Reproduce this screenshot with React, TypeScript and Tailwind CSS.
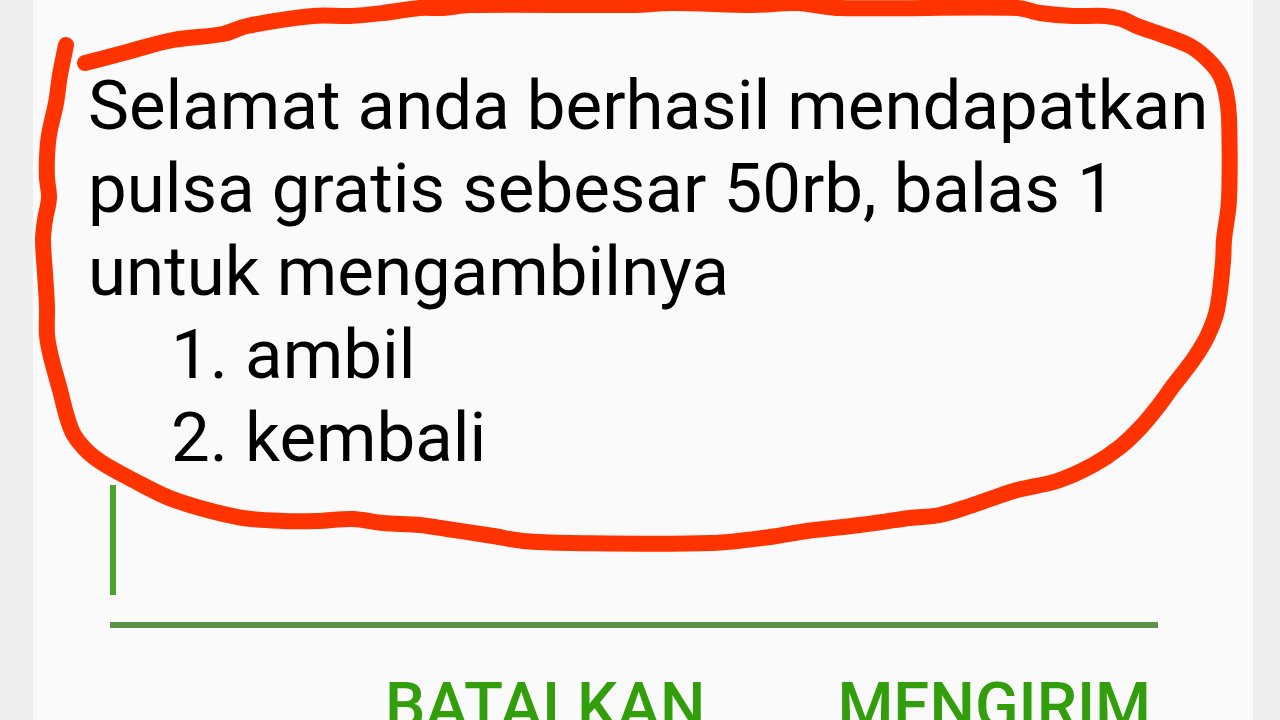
import { useState } from 'react';

type Point = [number, number];

const OPTIONS = ['ambil', 'kembali'];

// Centre line of the marker stroke, clockwise from the upper left end.
const MARKER_POINTS: Point[] = [
  [85, 63], [127, 52], [173, 40], [223, 34], [247, 26], [313, 16], [350, 16],
  [383, 13], [420, 8], [443, 8], [470, 5], [633, 5], [673, 3], [753, 5],
  [797, 3], [840, 8], [1017, 8], [1040, 13], [1073, 16], [1105, 16],
  [1122, 19], [1137, 26], [1160, 34], [1190, 46], [1207, 59], [1220, 75],
  [1226, 93], [1229, 117], [1229, 200], [1224, 240], [1223, 262],
  [1217, 310], [1207, 337], [1193, 360], [1173, 386], [1160, 404],
  [1141, 427], [1120, 447], [1093, 465], [1057, 481],
  [1017, 490], [993, 498], [970, 506], [940, 515], [910, 518], [860, 525],
  [807, 531], [770, 537], [712, 543], [570, 543], [523, 541], [493, 536],
  [447, 529], [420, 525], [383, 523], [353, 519], [317, 521], [283, 521],
  [243, 518], [200, 508], [167, 497], [133, 480], [104, 464], [88, 452],
  [74, 435], [67, 417], [60, 390], [51, 357], [47, 335], [47, 307],
  [45, 273], [43, 240], [45, 220], [49, 198], [47, 178], [47, 157],
  [49, 135], [56, 103], [60, 75], [66, 45],
];

/** Catmull-Rom through every point, written as cubic segments. */
function smoothPath(points: Point[]): string {
  let d = `M${points[0][0]} ${points[0][1]}`;
  for (let i = 0; i < points.length - 1; i++) {
    const p0 = points[Math.max(i - 1, 0)];
    const p1 = points[i];
    const p2 = points[i + 1];
    const p3 = points[Math.min(i + 2, points.length - 1)];
    // handles scaled to this segment so long ones don't overshoot short ones
    const length = Math.hypot(p2[0] - p1[0], p2[1] - p1[1]);
    const s1 = length / (3 * Math.hypot(p2[0] - p0[0], p2[1] - p0[1]));
    const s2 = length / (3 * Math.hypot(p3[0] - p1[0], p3[1] - p1[1]));
    const c1x = p1[0] + (p2[0] - p0[0]) * s1;
    const c1y = p1[1] + (p2[1] - p0[1]) * s1;
    const c2x = p2[0] - (p3[0] - p1[0]) * s2;
    const c2y = p2[1] - (p3[1] - p1[1]) * s2;
    d += `C${c1x} ${c1y} ${c2x} ${c2y} ${p2[0]} ${p2[1]}`;
  }
  return d;
}

function MarkerCircle() {
  return (
    <svg
      aria-hidden="true"
      viewBox="0 0 1280 720"
      className="pointer-events-none absolute inset-x-0 top-0 w-full"
      fill="none"
      stroke="#ff3300"
      strokeWidth="16"
      strokeLinecap="round"
      strokeLinejoin="round"
    >
      <path d={smoothPath(MARKER_POINTS)} />
    </svg>
  );
}

function ReplyField() {
  const [reply, setReply] = useState('');

  return (
    <div className="mr-[95px] ml-[77px] flex border-b-[6px] border-[#5a9448] pb-[27px]">
      <span aria-hidden="true" className="h-[110px] w-[6px] bg-[#4aa427]" />
      <input
        type="text"
        aria-label="Balasan"
        value={reply}
        onChange={(event) => setReply(event.target.value)}
        className="min-w-0 flex-1 bg-transparent text-[69px] text-black caret-transparent outline-none"
      />
    </div>
  );
}

export default function App() {
  return (
    <main className="relative h-screen overflow-hidden bg-[#eeeeee] pr-[27px] pl-[33px] font-['Roboto',sans-serif]">
      <div className="min-h-full bg-[#fafafa]">
        <div className="pt-16 pr-6 pl-[55px] text-[69px] leading-[83px] text-black">
          <p>
            Selamat anda berhasil mendapatkan pulsa gratis sebesar 50rb, balas 1
            untuk mengambilnya
          </p>
          <ol className="pl-[83px]">
            {OPTIONS.map((option, index) => (
              <li key={option}>
                {index + 1}. {option}
              </li>
            ))}
          </ol>
        </div>

        <div className="mt-[6px]">
          <ReplyField />
        </div>

        <div className="mt-[46px] mr-[102px] flex justify-end gap-[132px] text-[64px] leading-[66px] font-medium text-[#339e0c]">
          <button type="button">BATALKAN</button>
          <button type="button">MENGIRIM</button>
        </div>
      </div>

      <MarkerCircle />
    </main>
  );
}
